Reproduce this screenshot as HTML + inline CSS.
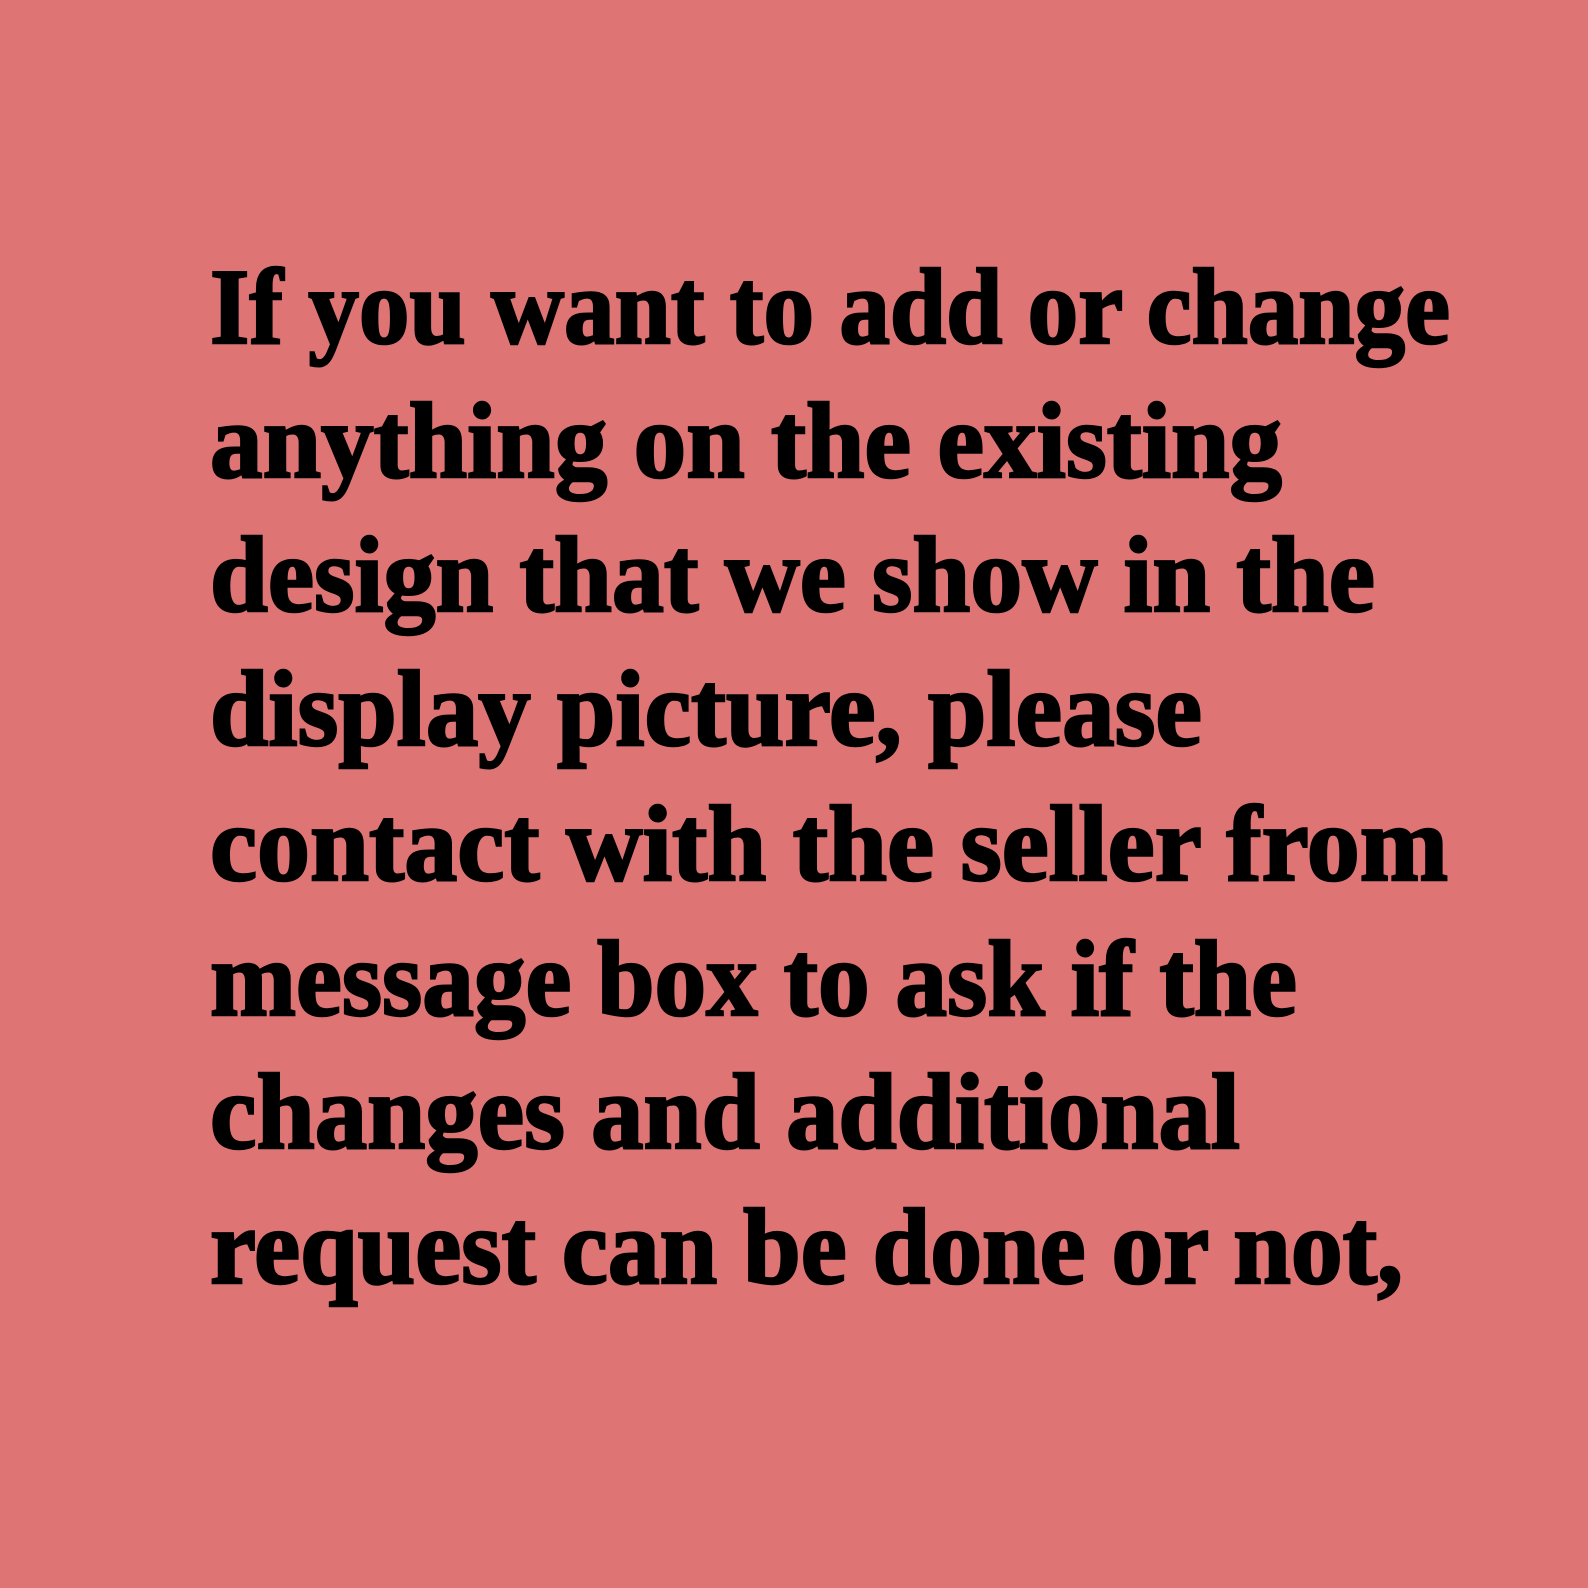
<!DOCTYPE html>
<html>
<head>
<meta charset="utf-8">
<style>
html,body{margin:0;padding:0;width:1588px;height:1588px;background:#DE7574;overflow:hidden}
svg{display:block}
text{font-family:"Liberation Serif",serif;font-weight:bold;font-size:108px;fill:#000;stroke:#000;stroke-width:2.5px}
</style>
</head>
<body>
<svg width="1588" height="1588" viewBox="0 0 1588 1588">
<rect width="1588" height="1588" fill="#DE7574"/>
<text x="210" y="343" textLength="1240" lengthAdjust="spacingAndGlyphs">If you want to add or change</text>
<text x="210" y="477" textLength="1072" lengthAdjust="spacingAndGlyphs">anything on the existing</text>
<text x="210" y="611" textLength="1165" lengthAdjust="spacingAndGlyphs">design that we show in the</text>
<text x="210" y="745" textLength="992" lengthAdjust="spacingAndGlyphs">display picture, please</text>
<text x="210" y="880" textLength="1238" lengthAdjust="spacingAndGlyphs">contact with the seller from</text>
<text x="210" y="1015" textLength="1087" lengthAdjust="spacingAndGlyphs">message box to ask if the</text>
<text x="210" y="1148" textLength="1030" lengthAdjust="spacingAndGlyphs">changes and additional</text>
<text x="210" y="1283" textLength="1193" lengthAdjust="spacingAndGlyphs">request can be done or not,</text>
</svg>
</body>
</html>
